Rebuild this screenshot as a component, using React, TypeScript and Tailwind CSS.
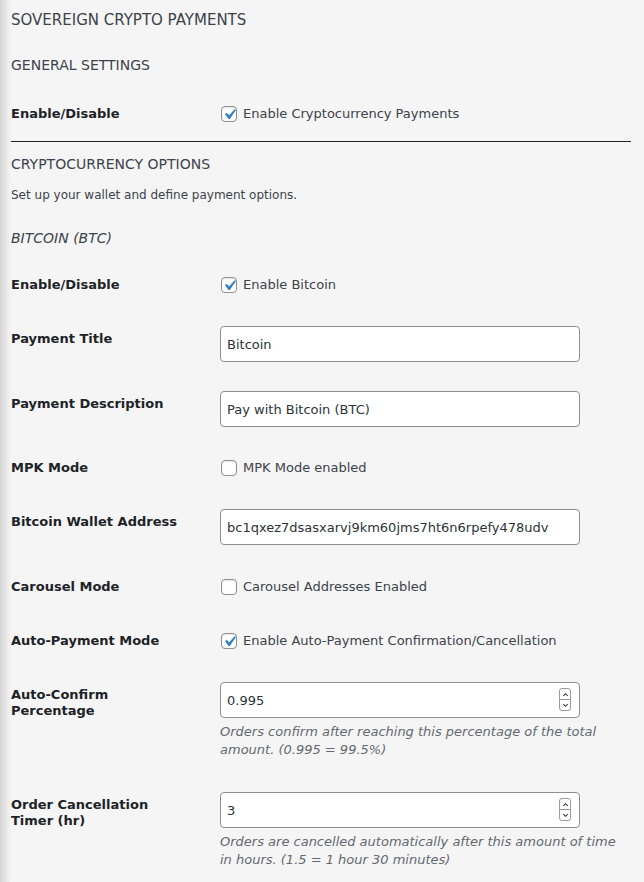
import type { ReactNode } from 'react';

function Checkbox({ checked }: { checked?: boolean }) {
  return (
    <span className="relative inline-block w-4 h-4 shrink-0 rounded-[4px] border border-[#8c8f94] bg-white shadow-[inset_0_1px_2px_rgba(0,0,0,0.1)]">
      {checked && (
        <svg
          viewBox="0 0 20 20"
          className="absolute left-[-3px] top-[-3px] w-[21px] h-[21px]"
        >
          <path
            d="M14.83 4.89l1.34.94-5.81 8.38H9.02L5.78 9.67l1.34-1.25 2.57 2.4z"
            fill="#3582c4"
          />
        </svg>
      )}
    </span>
  );
}

// native spin buttons only show on hover, so draw them
function Spinner() {
  return (
    <span className="absolute right-[9px] top-[6px] flex flex-col">
      <span className="flex items-center justify-center w-[12px] h-[12px] rounded-t-[3px] border border-[#9a9a9a] bg-white">
        <svg viewBox="0 0 8 8" className="w-[7px] h-[7px]">
          <path d="M1.5 5.5L4 3l2.5 2.5" fill="none" stroke="#333" strokeWidth="1.2" />
        </svg>
      </span>
      <span className="flex items-center justify-center w-[12px] h-[12px] -mt-px rounded-b-[3px] border border-[#9a9a9a] bg-white">
        <svg viewBox="0 0 8 8" className="w-[7px] h-[7px]">
          <path d="M1.5 2.5L4 5l2.5-2.5" fill="none" stroke="#333" strokeWidth="1.2" />
        </svg>
      </span>
    </span>
  );
}

function CheckRow({
  label,
  text,
  checked,
  pt,
  pb,
}: {
  label: string;
  text: string;
  checked?: boolean;
  pt: string;
  pb: string;
}) {
  return (
    <div className={`flex ${pt} ${pb}`}>
      <div className="w-[209px] shrink-0 text-[13px] leading-[18px] font-bold text-[#1d2327]">
        {label}
      </div>
      <label className="flex items-center h-[18px] gap-[6px] pl-px text-[13px] text-[#3c434a]">
        <Checkbox checked={checked} />
        <span>{text}</span>
      </label>
    </div>
  );
}

function InputRow({
  label,
  value,
  number,
  description,
  pb = 'pb-[14px]',
}: {
  label: ReactNode;
  value: string;
  number?: boolean;
  description?: ReactNode;
  pb?: string;
}) {
  return (
    <div className={`flex pt-[15px] ${pb}`}>
      <div className="w-[209px] shrink-0 pt-[5px] text-[13px] leading-[16px] font-bold text-[#1d2327]">
        {label}
      </div>
      <div className="flex-1 pr-[10px]">
        <div className="relative w-[360px]">
          <input
            type="text"
            defaultValue={value}
            className="block w-full h-[36px] px-[6px] rounded-[4px] border border-[#8c8f94] bg-white text-[13px] text-[#2c3338] outline-none"
          />
          {number && <Spinner />}
        </div>
        {description && (
          <p className="mt-[5px] text-[13px] leading-[18px] italic text-[#646970]">
            {description}
          </p>
        )}
      </div>
    </div>
  );
}

export default function App() {
  return (
    <div className="min-h-screen bg-[#f5f5f5] bg-[linear-gradient(to_right,#d4d4d4,#f5f5f5_11px)] pl-[11px] pr-[13px] pt-[9px] pb-[20px] font-['DejaVu_Sans',sans-serif]">
      <h2 className="text-[15px] leading-[22px] text-[#3c434a]">SOVEREIGN CRYPTO PAYMENTS</h2>
      <h3 className="mt-[24px] text-[14px] leading-[20px] text-[#3c434a]">GENERAL SETTINGS</h3>

      <CheckRow
        label="Enable/Disable"
        text="Enable Cryptocurrency Payments"
        checked
        pt="pt-[30px]"
        pb="pb-[18px]"
      />

      <div className="h-px bg-[#1d2327]" />

      <h3 className="mt-[12px] text-[14px] leading-[20px] text-[#3c434a]">CRYPTOCURRENCY OPTIONS</h3>
      <p className="mt-[12px] text-[12px] leading-[18px] text-[#3c434a]">
        Set up your wallet and define payment options.
      </p>
      <h4 className="mt-[24px] text-[14px] leading-[20px] italic text-[#3c434a]">BITCOIN (BTC)</h4>

      <CheckRow label="Enable/Disable" text="Enable Bitcoin" checked pt="pt-[28px]" pb="pb-[17px]" />
      <InputRow label="Payment Title" value="Bitcoin" />
      <InputRow label="Payment Description" value="Pay with Bitcoin (BTC)" />
      <CheckRow label="MPK Mode" text="MPK Mode enabled" pt="pt-[18px]" pb="pb-[17px]" />
      <InputRow
        label="Bitcoin Wallet Address"
        value="bc1qxez7dsasxarvj9km60jms7ht6n6rpefy478udv"
        pb="pb-[15px]"
      />
      <CheckRow label="Carousel Mode" text="Carousel Addresses Enabled" pt="pt-[18px]" pb="pb-[17px]" />
      <CheckRow
        label="Auto-Payment Mode"
        text="Enable Auto-Payment Confirmation/Cancellation"
        checked
        pt="pt-[19px]"
        pb="pb-[17px]"
      />
      <InputRow
        label={
          <>
            Auto-Confirm
            <br />
            Percentage
          </>
        }
        value="0.995"
        number
        pb="pb-[18px]"
        description="Orders confirm after reaching this percentage of the total amount. (0.995 = 99.5%)"
      />
      <InputRow
        label={
          <>
            Order Cancellation
            <br />
            Timer (hr)
          </>
        }
        value="3"
        number
        description="Orders are cancelled automatically after this amount of time in hours. (1.5 = 1 hour 30 minutes)"
      />
    </div>
  );
}
